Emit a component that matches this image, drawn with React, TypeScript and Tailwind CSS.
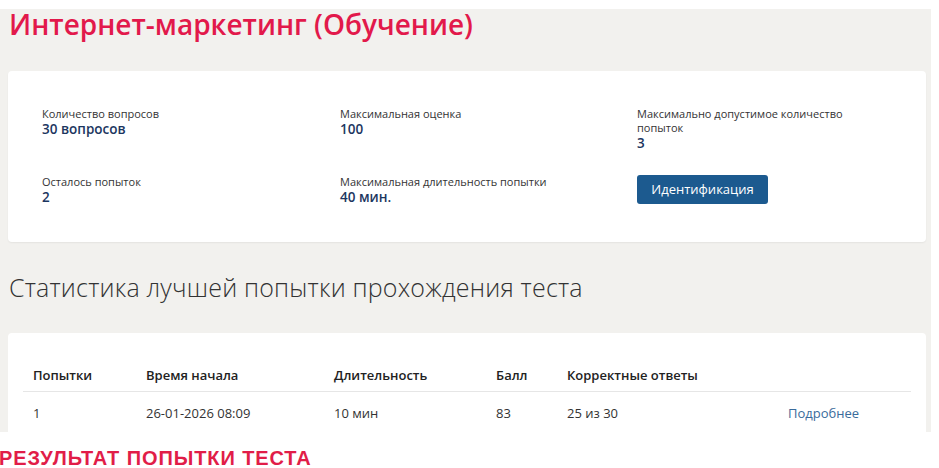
const stats = [
  { label: 'Количество вопросов', value: '30 вопросов' },
  { label: 'Максимальная оценка', value: '100' },
  { label: 'Максимально допустимое количество попыток', value: '3' },
  { label: 'Осталось попыток', value: '2' },
  { label: 'Максимальная длительность попытки', value: '40 мин.' },
];

const columns = ['Попытки', 'Время начала', 'Длительность', 'Балл', 'Корректные ответы', ''];
const row = ['1', '26-01-2026 08:09', '10 мин', '83', '25 из 30'];

const Stat = ({ label, value }: { label: string; value: string }) => (
  <div className="flex flex-col">
    <span className="max-w-[215px] text-[11px] leading-[14px] text-[#333]">{label}</span>
    <span className="text-[13.5px] font-semibold leading-[16px] text-[#1c3660]">{value}</span>
  </div>
);

export default function App() {
  return (
    <div className="h-[468px] w-[939px] overflow-hidden bg-white pt-[9px] font-['Open_Sans',sans-serif]">
      <div className="h-[423px] w-[931px] bg-[#f2f1ee] px-[8px]">
        <h1 className="pl-[1px] text-[28px] font-semibold leading-[38px] text-[#e2194b] -translate-y-[4px]">
          Интернет-маркетинг (Обучение)
        </h1>

        <div className="mt-[24px] h-[171px] w-[918px] rounded-[4px] bg-white pl-[34px] pt-[36px] shadow-[0_1px_2px_rgba(0,0,0,0.06)]">
          <div className="grid grid-cols-[298px_297px_1fr] gap-y-[24px]">
            <Stat {...stats[0]} />
            <Stat {...stats[1]} />
            <Stat {...stats[2]} />
            <Stat {...stats[3]} />
            <Stat {...stats[4]} />
            <div>
              <button
                type="button"
                className="h-[29px] w-[131px] rounded-[3px] bg-[#1c5a8f] text-[13px] text-white"
              >
                Идентификация
              </button>
            </div>
          </div>
        </div>

        <h2 className="mt-[30px] pl-[1px] text-[25px] font-light leading-[30px] tracking-[0.2px] text-[#333]">
          Статистика лучшей попытки прохождения теста
        </h2>

        <div className="mt-[31px] h-[99px] w-[918px] overflow-hidden rounded-t-[4px] bg-white px-[15px] pt-[34px]">
          <div className="grid grid-cols-[113px_188px_162px_71px_221px_1fr] border-b border-[#e6e6e6] pb-[8px]">
            {columns.map((c, i) => (
              <div key={i} className="px-[10px] text-[13px] font-semibold leading-[16px] text-[#222]">
                {c}
              </div>
            ))}
          </div>
          <div className="grid grid-cols-[113px_188px_162px_71px_221px_1fr] pt-[13px]">
            {row.map((c, i) => (
              <div key={i} className="px-[10px] text-[13px] leading-[16px] text-[#333]">
                {c}
              </div>
            ))}
            <div className="px-[10px] text-[13px] leading-[16px] text-[#3a6b9b]">Подробнее</div>
          </div>
        </div>
      </div>
      <div className="-ml-[1px] mt-[16px] font-['Liberation_Sans',sans-serif] text-[20px] font-bold leading-[20px] tracking-[0.9px] text-[#e11d48]">
        РЕЗУЛЬТАТ ПОПЫТКИ ТЕСТА
      </div>
    </div>
  );
}
